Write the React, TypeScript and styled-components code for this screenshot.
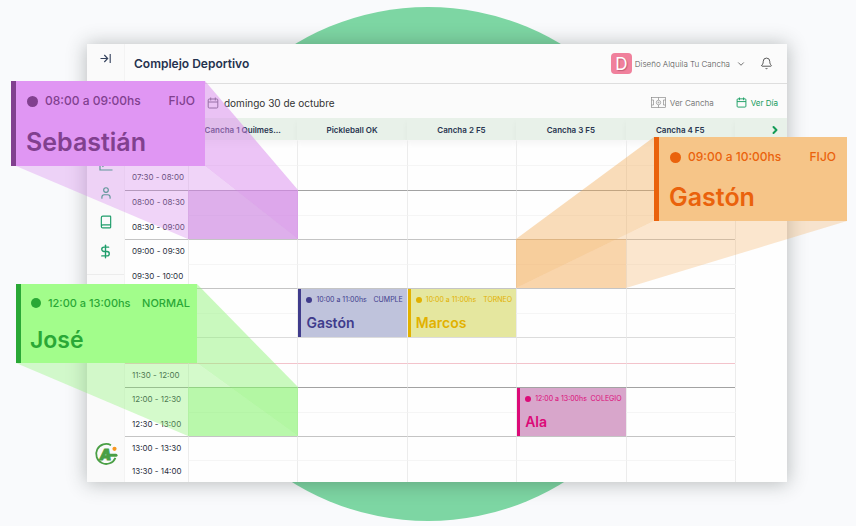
import React from "react";
import styled, { createGlobalStyle } from "styled-components";
import { Bell, Book, Calendar, ChevronDown, ChevronRight, DollarSign, User } from "lucide-react";

const Global = createGlobalStyle`
  *, *::before, *::after { box-sizing: border-box; }
  body {
    margin: 0;
    background: #f9fafc;
    font-family: Inter, "Open Sans", sans-serif;
    color: #24304a;
  }
  button { font: inherit; color: inherit; background: none; border: 0; padding: 0; cursor: pointer; }
`;

const Stage = styled.main`
  position: relative;
  min-height: 526px;
  padding: 44px 69px 44px 87px;
  overflow: hidden;
`;

const Disc = styled.div`
  position: absolute;
  top: 7px;
  left: 50%;
  width: 514px;
  height: 514px;
  border-radius: 50%;
  background: #7dd6a3;
  transform: translateX(-50%);
`;

const Panel = styled.section`
  position: relative;
  display: grid;
  grid-template-columns: 38px minmax(0, 1fr);
  background: #fefefe;
  overflow: hidden;
`;

const PanelShadow = styled.div`
  position: relative;
  box-shadow: 0 1px 18px 1px rgba(40, 50, 45, 0.3);
`;

const Sidebar = styled.aside`
  display: flex;
  flex-direction: column;
  align-items: center;
  padding: 8px 0 16px;
  background: #fafafa;
  border-right: 1px solid #f3f3f3;
`;

const IconButton = styled.button`
  display: flex;
  color: #33415c;
`;

const Nav = styled.nav`
  display: flex;
  flex-direction: column;
  align-items: center;
  gap: 15px;
  width: 100%;
  margin-top: 92px;
  a { display: flex; color: #1f9d6b; }
`;

const Divider = styled.hr`
  width: 100%;
  margin: 0 0 -5px;
  border: 0;
  border-top: 1px solid #ececec;
`;

const Brand = styled.a`
  display: flex;
  margin-top: auto;
`;

const Main = styled.div`
  min-width: 0;
`;

const Header = styled.header`
  display: flex;
  align-items: center;
  height: 40px;
  padding: 0 14px 0 9px;
  background: #fbfbfb;
  border-bottom: 1px solid #dedede;
`;

const Title = styled.h1`
  flex: 1;
  margin: 0;
  font-size: 12px;
  font-weight: 600;
  color: #25324e;
`;

const Account = styled.button`
  display: flex;
  align-items: center;
  margin-right: 14px;
  font-size: 8px;
  font-weight: 300;
  color: #555;
  svg { margin-left: 6px; }
`;

const Avatar = styled.span`
  display: grid;
  place-items: center;
  width: 21px;
  height: 21px;
  margin-right: 3px;
  border-radius: 4px;
  background: #f0809c;
  color: #fff;
  font-size: 17px;
  font-weight: 400;
  text-shadow: 1px 1px 1px rgba(120, 40, 60, 0.4);
`;

const Toolbar = styled.div`
  display: flex;
  align-items: center;
  height: 34px;
  padding: 3px 9px 0 82px;
  background: #fbfbfb;
`;

const DateButton = styled.button`
  display: flex;
  align-items: center;
  gap: 5px;
  margin-right: auto;
  font-size: 10px;
  color: #333;
  svg { color: #55555f; }
`;

const ViewButton = styled.button<{ $active?: boolean }>`
  display: flex;
  align-items: center;
  gap: 4px;
  margin-left: 22px;
  font-size: 8px;
  color: ${(p) => (p.$active ? "#169c60" : "#7c7c7c")};
`;

const Schedule = styled.table`
  width: 100%;
  table-layout: fixed;
  border-collapse: separate;
  border-spacing: 0;
`;

const Col = styled.col<{ $w: number }>`
  width: ${(p) => p.$w}px;
`;

const CourtHead = styled.th`
  height: 22px;
  padding: 2px 0 0;
  background: #e8f1e9;
  font-size: 8px;
  line-height: 10px;
  font-weight: 600;
  color: #27344f;
  white-space: nowrap;
  box-shadow: 0 4px 6px rgba(0, 0, 0, 0.04);
`;

const NextButton = styled.button`
  display: flex;
  margin-left: 28px;
  padding-left: 6px;
  color: #129b55;
`;

type Line = "half" | "hour" | "strong" | "soft" | "now" | "none";

const lineColor: Record<Line, string> = {
  half: "#f5f5f5",
  hour: "#c4c4c4",
  strong: "#a2a2a2",
  soft: "#dcdcdc",
  now: "#f3c3cb",
  none: "transparent",
};

const Slot = styled.tr<{ $h: number }>`
  height: ${(p) => p.$h}px;
`;

const Time = styled.th<{ $line: Line }>`
  padding: 0 0 2px 7px;
  border-top: 1px solid ${(p) => (p.$line === "half" ? "transparent" : lineColor[p.$line])};
  font-size: 8px;
  line-height: 10px;
  font-weight: 400;
  text-align: left;
  white-space: nowrap;
  color: #2a3040;
`;

const Cell = styled.td<{ $line: Line }>`
  padding: 0;
  vertical-align: top;
  border-top: 1px solid ${(p) => lineColor[p.$line]};
  border-left: 1px solid #ececec;
`;

const Booking = styled.article<{ $ink: string; $fill: string }>`
  display: flex;
  flex-direction: column;
  gap: 6px;
  height: 48px;
  padding: 6px 0 0 5px;
  border-left: 3px solid ${(p) => p.$ink};
  background: ${(p) => p.$fill};
  color: ${(p) => p.$ink};
`;

const BookingMeta = styled.div`
  display: flex;
  align-items: center;
  font-size: 7px;
  line-height: 10px;
  white-space: nowrap;
  padding-right: 4px;
  span { flex: 1; }
`;

const BookingName = styled.strong`
  font-size: 14px;
  line-height: 24px;
  font-weight: 600;
`;

const Dot = styled.i<{ $size: number; $gap: number }>`
  flex: none;
  width: ${(p) => p.$size}px;
  height: ${(p) => p.$size}px;
  margin-right: ${(p) => p.$gap}px;
  border-radius: 50%;
  background: currentColor;
`;

const Beams = styled.svg<{ $side: "left" | "right" }>`
  position: absolute;
  top: 0;
  ${(p) => p.$side}: 0;
  pointer-events: none;
`;

const Callout = styled.article<{
  $ink: string; $fill: string; $top: number; $width: number; $left?: number; $right?: number; $compact?: boolean;
}>`
  position: absolute;
  top: ${(p) => p.$top}px;
  ${(p) => (p.$left !== undefined ? `left: ${p.$left}px;` : `right: ${p.$right}px;`)}
  width: ${(p) => p.$width}px;
  padding: ${(p) => (p.$compact ? "10px 0 5px 10px" : "11px 0 6px 11px")};
  border-left: 5px solid ${(p) => p.$ink};
  background: ${(p) => p.$fill};
  color: ${(p) => p.$ink};
  font-size: ${(p) => (p.$compact ? 11 : 12)}px;
  strong { font-size: ${(p) => (p.$compact ? 23 : 25)}px; }
`;

const CalloutMeta = styled.div<{ $end: number }>`
  display: flex;
  align-items: center;
  padding-right: ${(p) => p.$end}px;
  line-height: 18px;
  font-weight: 500;
  white-space: nowrap;
  span { flex: 1; }
`;

const CalloutName = styled.strong<{ $gap: number }>`
  display: block;
  margin: ${(p) => p.$gap}px 0 0 -1px;
  line-height: 36px;
  font-weight: 600;
`;

const CollapseIcon = () => (
  <svg width="13" height="13" viewBox="0 0 13 13" fill="none" stroke="currentColor" strokeWidth="1.1">
    <path d="M1.5 6.5h7M5.3 3l3.4 3.5L5.3 10" />
    <path d="M11.2 2v9" />
  </svg>
);

const ChartIcon = () => (
  <svg width="14" height="14" viewBox="0 0 14 14" fill="none" stroke="currentColor" strokeWidth="1.2">
    <path d="M1 1v12h12.5M3.5 10l3-4 2.5 2 3.5-5" />
  </svg>
);

const CourtIcon = () => (
  <svg width="15" height="11" viewBox="0 0 15 11" fill="none" stroke="currentColor" strokeWidth="0.6">
    <rect x="0.5" y="0.5" width="14" height="10" />
    <path d="M7.5 0.5v2.5M7.500 8v2.500M0.5 3h2v5h-2M14.5 3h-2v5h2" />
    <circle cx="7.5" cy="5.5" r="2.200" />
    <circle cx="7.5" cy="5.5" r="0.500" />
  </svg>
);

const DayIcon = ({ size }: { size: number }) => (
  <svg width={size} height={size} viewBox="0 0 12 12" fill="none" stroke="currentColor" strokeWidth="1">
    <rect x="1.2" y="2" width="9.6" height="9" rx="1" />
    <path d="M1.2 5h9.6M3.7 0.5v3M8.3 0.5v3" />
  </svg>
);

const BrandIcon = () => (
  <svg width="24" height="24" viewBox="0 0 24 24" fill="none" role="img" aria-label="A">
    <path d="M17 3.200A10 10 0 1 0 21.400 15.800" stroke="#4a9f45" strokeWidth="1.8" />
    <text x="5.500" y="17.500" fontFamily="Inter, sans-serif" fontSize="15" fontWeight="900" fontStyle="italic" fill="#4a9f45" stroke="#4a9f45" strokeWidth="0.8">A</text>
    <path d="M15 13.2h7" stroke="#4a9f45" strokeWidth="3" strokeLinecap="round" />
    <circle cx="20.500" cy="6.8" r="2.1" fill="#f7971e" />
  </svg>
);

type Event = { time: string; tag: string; name: string; ink: string; fill: string };

const events: Record<string, Event> = {
  "6-1": { time: "10:00 a 11:00hs", tag: "CUMPLE", name: "Gastón", ink: "#403c8c", fill: "#bfc3dc" },
  "6-2": { time: "10:00 a 11:00hs", tag: "TORNEO", name: "Marcos", ink: "#e2b100", fill: "#e5e79f" },
  "10-3": { time: "12:00 a 13:00hs", tag: "COLEGIO", name: "Ala", ink: "#dc0a78", fill: "#d8a6cb" },
};

const slots: { label: string; line: Line; h: number }[] = [
  { label: "", line: "none", h: 25 },
  { label: "07:30 - 08:00", line: "half", h: 25 },
  { label: "08:00 - 08:30", line: "strong", h: 25 },
  { label: "08:30 - 09:00", line: "half", h: 24 },
  { label: "09:00 - 09:30", line: "hour", h: 25 },
  { label: "09:30 - 10:00", line: "half", h: 24 },
  { label: "", line: "hour", h: 25 },
  { label: "", line: "half", h: 24 },
  { label: "", line: "soft", h: 26 },
  { label: "11:30 - 12:00", line: "now", h: 24 },
  { label: "12:00 - 12:30", line: "strong", h: 25 },
  { label: "12:30 - 13:00", line: "half", h: 24 },
  { label: "13:00 - 13:30", line: "hour", h: 24 },
  { label: "13:30 - 14:00", line: "half", h: 22 },
];

const courts = ["Cancha 1 Quilmes...", "Pickleball OK", "Cancha 2 F5", "Cancha 3 F5", "Cancha 4 F5"];

export default function App() {
  return (
    <>
      <Global />
      <Stage>
        <Disc />
        <PanelShadow>
          <Panel>
            <Sidebar>
              <IconButton aria-label="Expandir menú"><CollapseIcon /></IconButton>
              <Nav>
                <a href="#estadisticas" aria-label="Estadísticas"><ChartIcon /></a>
                <a href="#clientes" aria-label="Clientes"><User size={14} strokeWidth={2} /></a>
                <a href="#reservas" aria-label="Reservas"><Book size={14} strokeWidth={2} /></a>
                <a href="#caja" aria-label="Caja"><DollarSign size={15} strokeWidth={2.2} /></a>
                <Divider />
                <a href="#agenda" aria-label="Agenda"><Calendar size={14} /></a>
              </Nav>
              <Brand href="#inicio" aria-label="Inicio"><BrandIcon /></Brand>
            </Sidebar>
            <Main>
              <Header>
                <Title>Complejo Deportivo</Title>
                <Account>
                  <Avatar>D</Avatar>
                  Diseño Alquila Tu Cancha
                  <ChevronDown size={10} strokeWidth={2} />
                </Account>
                <IconButton aria-label="Notificaciones"><Bell size={13} strokeWidth={1.8} color="#555" /></IconButton>
              </Header>
              <Toolbar>
                <DateButton><DayIcon size={12} />domingo 30 de octubre</DateButton>
                <ViewButton><CourtIcon />Ver Cancha</ViewButton>
                <ViewButton $active><DayIcon size={11} />Ver Día</ViewButton>
              </Toolbar>
              <Schedule>
                <colgroup>
                  <Col $w={63} />
                  {courts.map((c) => <col key={c} />)}
                  <Col $w={52} />
                </colgroup>
                <thead>
                  <tr>
                    <CourtHead />
                    {courts.map((c) => <CourtHead key={c} scope="col">{c}</CourtHead>)}
                    <CourtHead>
                      <NextButton aria-label="Siguiente"><ChevronRight size={12} strokeWidth={4} /></NextButton>
                    </CourtHead>
                  </tr>
                </thead>
                <tbody>
                  {slots.map((slot, r) => (
                    <Slot key={r} $h={slot.h}>
                      <Time scope="row" $line={slot.line}>{slot.label}</Time>
                      {courts.map((c, i) => {
                        if (events[`${r - 1}-${i}`]) return null;
                        const ev = events[`${r}-${i}`];
                        return (
                          <Cell key={c} $line={slot.line} rowSpan={ev ? 2 : 1}>
                            {ev && (
                              <Booking $ink={ev.ink} $fill={ev.fill}>
                                <BookingMeta><Dot $size={6} $gap={4} /><span>{ev.time}</span>{ev.tag}</BookingMeta>
                                <BookingName>{ev.name}</BookingName>
                              </Booking>
                            )}
                          </Cell>
                        );
                      })}
                      <Cell $line="none" />
                    </Slot>
                  ))}
                </tbody>
              </Schedule>
            </Main>
          </Panel>
        </PanelShadow>

        <Beams $side="left" width="300" height="526" viewBox="0 0 300 526">
          <g fill="#d98aee">
            <path d="M188 190H298V239H188Z" fill="#c48ad4" fillOpacity="0.5" />
            <path d="M205 81L298 190V239L205 166Z" fillOpacity="0.5" />
            <path d="M16 166H205L298 239H188Z" fillOpacity="0.36" />
          </g>
          <g fill="#8bf573">
            <path d="M188 387H298V436H188Z" fillOpacity="0.36" />
            <path d="M197 284L298 387V436L197 363Z" fillOpacity="0.46" />
            <path d="M16 363H197L298 436H188Z" fillOpacity="0.36" />
          </g>
        </Beams>
        <Beams $side="right" width="356" height="526" viewBox="500 0 356 526">
          <g fill="#f3a952">
            <path d="M516 239H626V288H516Z" fillOpacity="0.28" />
            <path d="M654 137L516 239V288L654 221Z" fillOpacity="0.4" />
            <path d="M654 221H847L626 288H516Z" fillOpacity="0.28" />
          </g>
        </Beams>

        <Callout $ink="#81408f" $fill="#e096f3" $left={11} $top={81} $width={194}>
          <CalloutMeta $end={10}><Dot $size={11} $gap={7} /><span>08:00 a 09:00hs</span>FIJO</CalloutMeta>
          <CalloutName $gap={14}>Sebastián</CalloutName>
        </Callout>
        <Callout $ink="#2aa836" $fill="#a2fd8b" $left={16} $top={284} $width={181} $compact>
          <CalloutMeta $end={7}><Dot $size={10} $gap={7} /><span>12:00 a 13:00hs</span>NORMAL</CalloutMeta>
          <CalloutName $gap={10}>José</CalloutName>
        </Callout>
        <Callout $ink="#ea620c" $fill="#f6c588" $right={9} $top={137} $width={193}>
          <CalloutMeta $end={11}><Dot $size={11} $gap={7} /><span>09:00 a 10:00hs</span>FIJO</CalloutMeta>
          <CalloutName $gap={13}>Gastón</CalloutName>
        </Callout>
      </Stage>
    </>
  );
}
